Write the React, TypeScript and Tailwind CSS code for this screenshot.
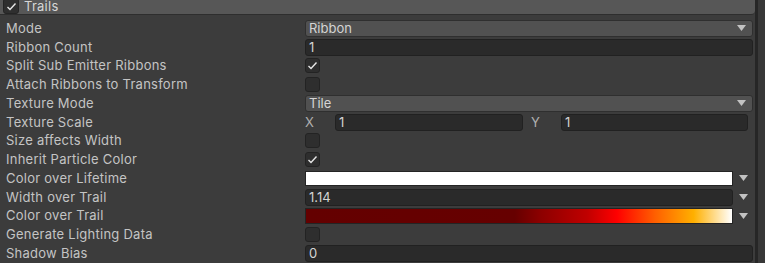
import React from 'react'

const font = { fontFamily: 'Inter, "Noto Sans", sans-serif' }

function Arrow() {
  return (
    <svg width="9" height="6" viewBox="0 0 9 6" className="shrink-0">
      <path d="M0 0 H9 L4.5 6 Z" fill="#c2c2c2" />
    </svg>
  )
}

function Check({ checked }: { checked?: boolean }) {
  return (
    <div className="w-[15px] h-[15px] rounded-[3px] bg-[#2e2e2e] border border-[#232323] flex items-center justify-center">
      {checked && (
        <svg width="11" height="9" viewBox="0 0 11 9">
          <path d="M1.5 5 L4 7.5 L9.5 1.5" stroke="#e6e6e6" strokeWidth="1.4" fill="none" />
        </svg>
      )}
    </div>
  )
}

function Dropdown({ value }: { value: string }) {
  return (
    <div className="flex-1 h-[17px] rounded-[3px] bg-[#515151] border border-[#2f2f2f] flex items-center justify-between pl-[3px] pr-[6px] text-[#d4d4d4]">
      <span>{value}</span>
      <Arrow />
    </div>
  )
}

function Field({ value, className = '' }: { value: string; className?: string }) {
  return (
    <div className={`h-[17px] rounded-[3px] bg-[#2a2a2a] border border-[#212121] flex items-center pl-[3px] text-[#d4d4d4] ${className}`}>
      {value}
    </div>
  )
}

function Row({ label, children }: { label: string; children: React.ReactNode }) {
  return (
    <div className="h-[18.75px] flex items-center">
      <div className="w-[305px] pl-[6px] text-[#c4c4c4] whitespace-nowrap tracking-[0.25px]">{label}</div>
      <div className="flex-1 flex items-center pr-[2px]">{children}</div>
    </div>
  )
}

export default function App() {
  return (
    <div className="w-[765px] h-[263px] bg-[#3c3c3c] flex overflow-hidden text-[13px] leading-none" style={font}>
      <div className="w-[755px] flex flex-col">
        <div className="h-[15px] bg-[#575757] border-b border-[#2e2e2e] rounded-br-[4px] overflow-hidden">
          <div className="-mt-[3px] h-[18px] flex items-center pl-[3px] gap-[5px]">
            <div className="w-[16px] h-[16px] rounded-[3px] bg-[#2f2f2f] border border-[#252525] flex items-center justify-center">
              <svg width="11" height="9" viewBox="0 0 11 9">
                <path d="M1.5 5 L4 7.5 L9.5 1.5" stroke="#e6e6e6" strokeWidth="1.4" fill="none" />
              </svg>
            </div>
            <span className="text-[#d6d6d6] text-[13px] tracking-[0.25px]">Trails</span>
          </div>
        </div>
        <div className="pt-[4px] flex flex-col">
          <Row label="Mode">
            <Dropdown value="Ribbon" />
          </Row>
          <Row label="Ribbon Count">
            <Field value="1" className="flex-1" />
          </Row>
          <Row label="Split Sub Emitter Ribbons">
            <Check checked />
          </Row>
          <Row label="Attach Ribbons to Transform">
            <Check />
          </Row>
          <Row label="Texture Mode">
            <Dropdown value="Tile" />
          </Row>
          <Row label="Texture Scale">
            <div className="flex-1 flex items-center pr-[5px]">
              <span className="w-[30px] text-[#b0b0b0]">X</span>
              <Field value="1" className="w-[188px]" />
              <span className="w-[38px] pl-[8px] text-[#b0b0b0]">Y</span>
              <Field value="1" className="flex-1" />
            </div>
          </Row>
          <Row label="Size affects Width">
            <Check />
          </Row>
          <Row label="Inherit Particle Color">
            <Check checked />
          </Row>
          <Row label="Color over Lifetime">
            <div className="flex-1 flex items-center gap-[6px] pr-[5px]">
              <div className="flex-1 h-[15px] bg-white border border-[#242424]" />
              <Arrow />
            </div>
          </Row>
          <Row label="Width over Trail">
            <div className="flex-1 flex items-center gap-[6px] pr-[5px]">
              <Field value="1.14" className="flex-1" />
              <Arrow />
            </div>
          </Row>
          <Row label="Color over Trail">
            <div className="flex-1 flex items-center gap-[6px] pr-[5px]">
              <div className="flex-1 h-[16px] border border-[#242424] bg-[linear-gradient(to_right,#640000_0%,#660000_49%,#8c0000_55%,#c00000_66%,#ff0000_73%,#ff6000_82%,#ffb000_91%,#ffffff_100%)]" />
              <Arrow />
            </div>
          </Row>
          <Row label="Generate Lighting Data">
            <Check />
          </Row>
          <Row label="Shadow Bias">
            <Field value="0" className="flex-1" />
          </Row>
        </div>
      </div>
      <div className="w-[3px] bg-[#262626]" />
      <div className="flex-1 bg-[#383838]" />
    </div>
  )
}
